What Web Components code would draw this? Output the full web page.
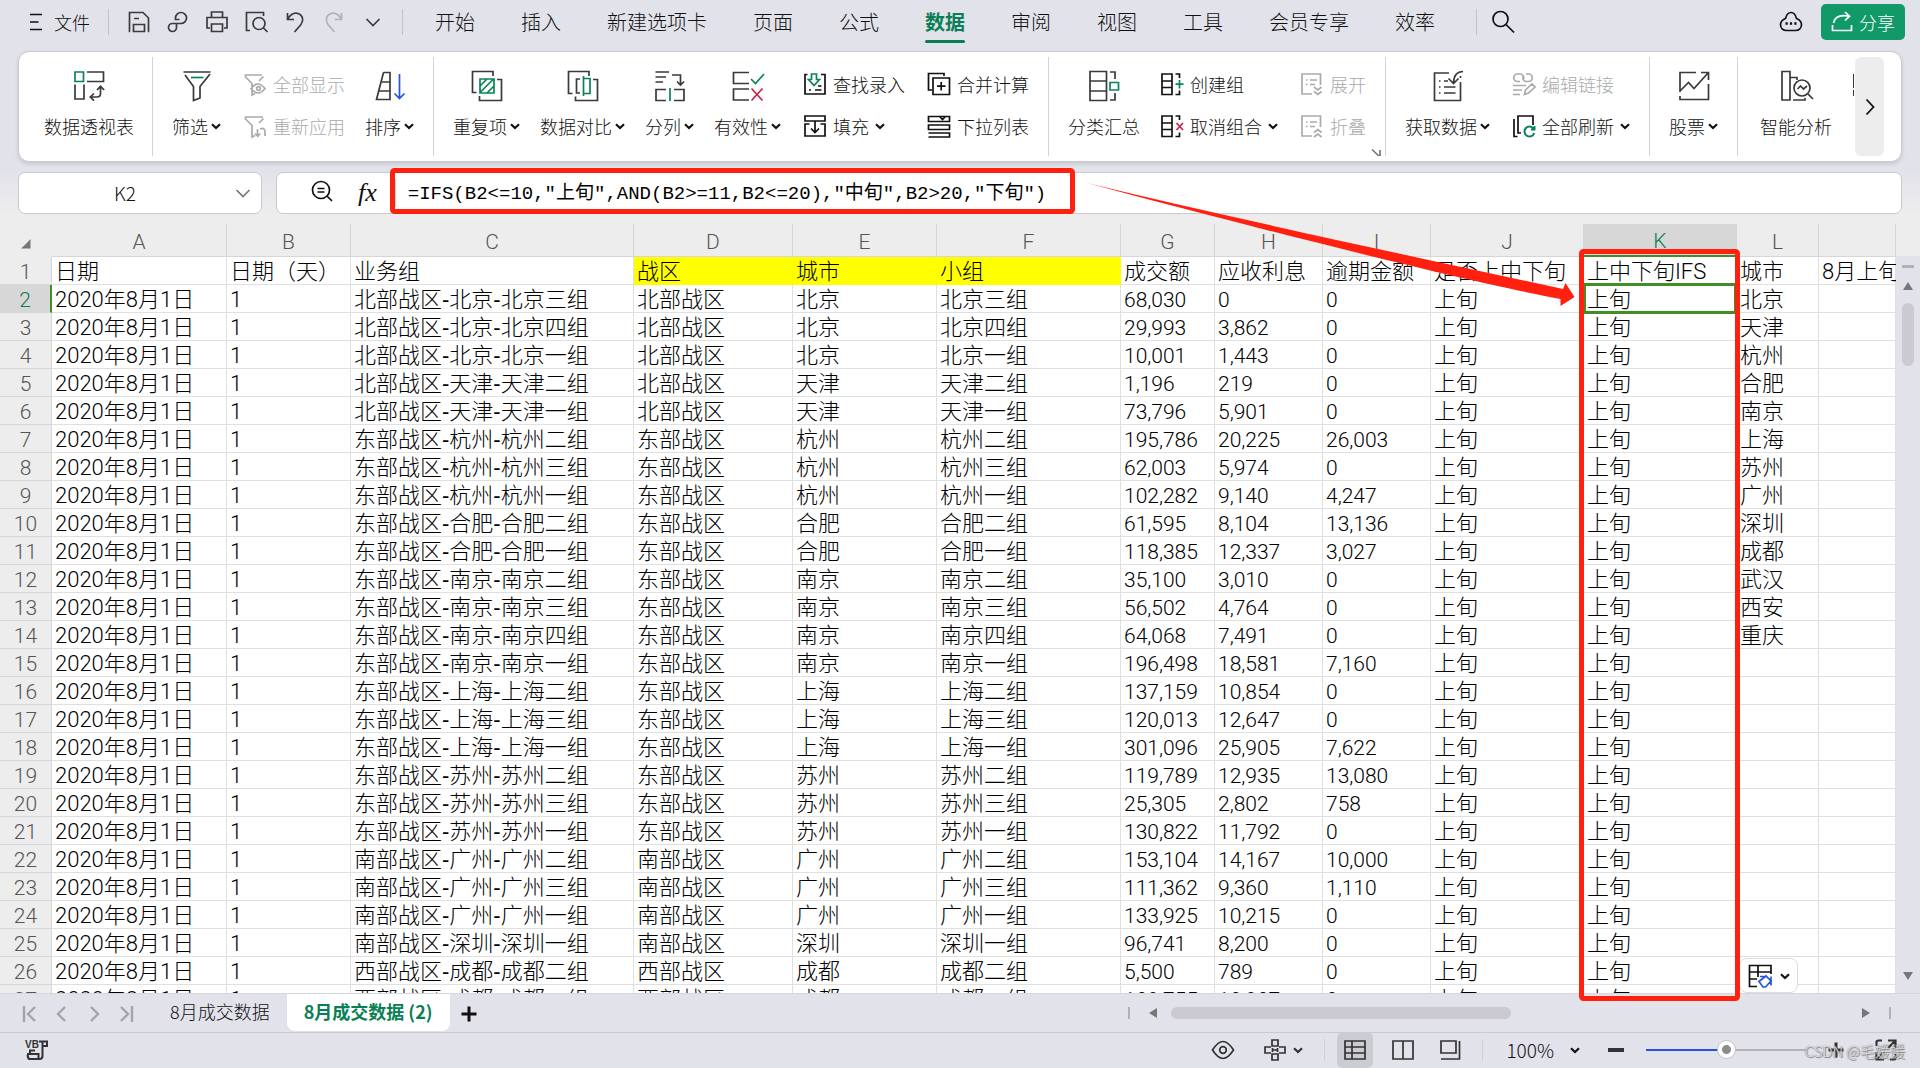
<!DOCTYPE html>
<html lang="zh-CN">
<head>
<meta charset="utf-8">
<title>8月成交数据</title>
<style>
  html, body { margin: 0; height: 100%; }
  body {
    --ink: #111;
    --green: #0a7f55;
    --chrome: #e2e2ea;
    --line: #c9c9cf;
    font-family: "Noto Sans CJK SC", "Liberation Sans", sans-serif;
    font-weight: 300;
    font-size: 18px;
    color: var(--ink);
    overflow: hidden;
  }
</style>
</head>
<body>
<sheet-app></sheet-app>

<script>
const G = '#0a8457', B = '#2354e0', R = '#c8234a';

const ICONS = {
  menu: [24, '<path d="M6 4.500h12M6 12h8.500M6 19.500h12"/>'],
  save: [24, '<path d="M3 21.500H2.500V2.500H16L21.500 8v13.500H21M7 8.500h5M6.500 21.500v-7h11v7z"/>'],
  link: [24, '<path d="M10.500 17.500a4 4 0 1 1-4-4h8.500a5.500 5.500 0 1 0-5.500-5.500v1.500h4M10.500 13.500v4"/>'],
  print: [24, '<path d="M6.500 7V2h11v5M5 18H2V7.500h20V18h-3M6.500 14h11v7.500h-11z"/>'],
  preview: [24, '<path d="M6 20.500H2.500V2.500h17V6M2.500 6v11"/><circle cx="15" cy="13.500" r="6"/><path d="M19.500 18l4 4"/>'],
  undo: [24, '<path d="M4.500 3v6.500H11M4.500 9.500C7 5 11 2.500 15 3.500c5 1.500 6 7 3 11L11.500 22"/>'],
  redo: [24, '<path d="M19.500 3v6.500H13M19.500 9.500C17 5 13 2.500 9 3.500c-5 1.500-6 7-3 11L12.500 22"/>'],
  down: [24, '<path d="M5.500 9l6.500 6.500L18.500 9"/>'],
  search: [24, '<circle cx="9.500" cy="9" r="7.500"/><path d="M15 14.500l8 8"/>'],
  cloud: [24, '<path d="M6.500 8.500C7.500 4.500 9.500 2.500 12 2.500s4.500 2 5.500 6c3.500 1.500 5 3.500 5 6 0 4-3 6-6 6h-9c-3 0-6-2-6-6 0-2.500 1.500-4.500 5-6z"/><path stroke-width="2.600" d="M6.500 13.500h2.200M10.900 13.500h2.200M15.300 13.500h2.200"/>'],
  share: [22, '<path d="M1.500 14v5.500h19V14M2.500 12c1-6 6-8.500 15-7M14 1l4.500 4.200L14 9.500"/>'],
  chev: [10, '<path stroke-width="2.200" d="M1 3.200l4 3.800 4-3.800"/>'],
  right: [24, '<path stroke-width="1.800" d="M8.500 4.500L15.500 12l-7 7.500"/>'],
  corner: [10, '<path d="M1 1.500l7.500 7M9 2v7H2"/>'],

  pivot: [32, `<path stroke="${G}" d="M2 2h8.500v9.500H2z"/><path d="M14 2h16.500v9.500H14M2 14.500V29h9V14.500M27.500 17v6.500q0 3.500-3.500 3.500h-6M24 20l3.500-3.700L31.200 20M21 23.500l-3.700 3.500 3.700 3.700"/>`],
  filter: [32, `<path d="M2.500 2h27M4 5l8.500 11.500v14L19 28V16.500L29 4"/><path stroke="${G}" d="M10 7.500h12.500"/>`],
  sort: [32, `<path d="M9.500 2.500h6.500v27H2.500L9.500 2.500M8 12h8M5.500 21H16"/><path stroke="${B}" d="M25.500 4v24M20.500 23.500l5 5 5-5"/>`],
  dup: [32, `<path d="M5.500 22.500H1.500V1.500H22V6M26 9.500h4.500v21H8.500V26"/><path stroke="${G}" d="M9 9h14v14H9zM9 16l7-7M9 22.500L22.500 9M16 23l7-7"/>`],
  compare: [32, `<path d="M5.500 23.500H1.500V1.500H22V6M13 9H9.500v14H13M26 9.500h4.500v21H8.500V26.500"/><path stroke="${G}" d="M16.500 8.500h6.500v15h-6.500zM16.500 6v20"/>`],
  split: [32, `<path d="M1.500 2H15M1.500 7H12M1.500 12H9M18 5h8.500v9M23 11.500l3.500 3.500 3.500-3.500M12 19.500H2v11h10M20 19.500h10v11H20"/><path stroke="${G}" d="M16 18v13"/>`],
  valid: [32, `<path d="M17 2.500H1.500v11H17M17 19H1.500v11H17"/><path stroke="${G}" d="M19 9l4.500 4.500L32 4"/><path stroke="${R}" d="M19.500 18.500l11 12M30.500 18.500l-11 12"/>`],
  subtotal: [32, `<path d="M2 1.500h16.500v29H2zM2 11h16.500M2 21h16.500M22 2h5v7M22 30h5v-7"/><path stroke="${G}" d="M22 12.500h8.500v7.500H22z"/>`],
  getdata: [32, '<path d="M17 3H2.500v27.500h26V12M28.500 6v2M31 1.500c-6 0-9 3-9.500 11M16.500 8.500l5 5 5-5M7 11h1.500M12 11h4M7 17h1.500M12 17h11.500M7 23h1.500M12 23h11.500"/>'],
  stock: [32, '<path d="M18 2.500H2V22M2 26v3.500h28.500V14M2 21l8.500-8.500 5.500 6L30 3M23 2.500h7.500V10"/>'],
  smart: [32, '<path d="M2 1.500h8v28.500H2zM10 7.500h7V10M13 30h12v-2"/><circle cx="22" cy="18" r="8"/><path d="M28 24l5 5M17.500 19l3-3 3 3 3.500-3"/>'],

  showall: [24, '<path d="M19 3H2.500v2L9 11.500V23l3-1.500M20.500 4.500L16 9M8 16.500q6.500-9 14 0-7 9-14 0z"/><circle cx="15.500" cy="16.500" r="1.800"/>'],
  reapply: [24, '<path d="M20 3H2.500v2L9 11.500V23l3-1.500M20.500 4.500L16 9M14.500 15v7M12 19.500l2.700 2.700 2.500-2.700M17 15q5-2 5 3v4"/>'],
  lookup: [24, `<path d="M4.500 2.500H2v19.500h20V2.500h-4M12 18h6.500M6 18h2M15 14h3.500"/><path stroke="${G}" d="M8.500 2h5v5.500h3l-5.500 6-5.500-6h3z"/>`],
  fill: [24, '<path d="M2 7V2h20v5zM6.500 10H2v12h20V10h-4.500M12 7v11M8 14.500l4 4 4-4"/>'],
  consol: [24, '<path d="M5 18H1.500V1.500H17V4M6 6h16.500v16.500H6zM14.200 10v8.500M10 14.200h8.500"/>'],
  droplist: [24, '<path d="M1.500 2.500h21v5h-21zM1.500 11h21v4.500h-21zM1.500 19h21v4h-21M13 3l2.500 2.500L18 3"/>'],
  group: [24, `<path d="M2 2h10v20.500H2zM2 9h10M2 15.500h10M15.500 2h4v4M15.500 22.500h4v-4"/><path stroke="${G}" d="M15.500 12.200h8M19.500 8v8.500"/>`],
  ungroup: [24, `<path d="M2 2h10v20.500H2zM2 9h10M2 15.500h10M15.500 2h4v4M15.500 22.500h4v-4"/><path stroke="${R}" d="M16.500 9l6.500 7M23 9l-6.500 7"/>`],
  expand: [24, '<path d="M12 22H2V2h18.500v11M6 8h1.500M10 8h7M6 12.500h1.500M10 12.500h5M14 15l3.800 3 3.700-3M14 19.500l3.800 3 3.700-3"/>'],
  collapse: [24, '<path d="M12 22H2V2h18.500v11M6 8h1.500M10 8h7M6 12.500h1.500M10 12.500h5M14 18.500l3.800-3 3.700 3M14 23l3.800-3 3.700 3"/>'],
  editlink: [24, '<path d="M8 9.500H5.500a3.500 3.500 0 1 1 0-7.500H8a3.500 3.500 0 0 1 3 5.500M14 2h2.500a3.500 3.500 0 1 1 0 7.500H14A3.500 3.500 0 0 1 11.500 4M1 13.500h13M1 18h9M1 22.500h7M12.500 22.500l1-4.500 6.500-6 3 3-6.500 6z"/>'],
  refresh: [24, `<path d="M5.500 22.500H2V5M9 19H6V2h15v9"/><path stroke="${G}" stroke-width="2" d="M21.500 14.500a5 5 0 1 0 .8 4.500M22.500 12v3.500H19"/>`],

  zoomtext: [24, '<circle cx="11" cy="11" r="8.500"/><path d="M17 17l5 5M7.500 9.500h7M7.500 13h7"/>'],
  first: [20, '<path stroke-width="2.400" d="M4 2v16M15 3L8 10l7 7"/>'],
  prev: [20, '<path stroke-width="2.400" d="M13 3l-7 7 7 7"/>'],
  next: [20, '<path stroke-width="2.400" d="M7 3l7 7-7 7"/>'],
  last: [20, '<path stroke-width="2.400" d="M16 2v16M5 3l7 7-7 7"/>'],
  plus: [20, '<path stroke-width="3" d="M10 2.500v15M2.500 10h15"/>'],
  minus: [20, '<path stroke-width="4" d="M2 10h16"/>'],
  triL: [10, '<path fill="#777" stroke="none" d="M9 0v10L1 5z"/>'],
  triR: [10, '<path fill="#777" stroke="none" d="M1 0v10l8-5z"/>'],
  triU: [10, '<path fill="#777" stroke="none" d="M0 9h10L5 1z"/>'],
  triD: [10, '<path fill="#777" stroke="none" d="M0 1h10L5 9z"/>'],
  all: [10, '<path fill="#777" stroke="none" d="M9.500 0v9.500H0C3 7 6 4 9.500 0z"/>'],
  macro: [24, '<text x="1" y="10" font-family="Liberation Sans" font-size="10" font-weight="700" fill="currentColor" stroke="none">VB</text><path stroke-width="2" d="M15 3.500h8v4.500h-4.500M18.500 3.500V18q0 3-3 3H5q-2-2-1-5h10.500v4M6 16v-3.500h5"/>'],
  eye: [24, '<path d="M1.500 12Q7 3.500 12 3.500T22.500 12Q17 20.500 12 20.500T1.500 12z"/><circle cx="12" cy="12" r="3.300"/>'],
  cross: [24, '<path d="M9 2h6v6H9zM9 16h6v6H9zM8 9H2v6h6M16 9h6v6h-6M9.500 10v4M14.500 10v4M10 12h4"/>'],
  normal: [24, '<path d="M2 3h20v18H2zM2 9h20M2 15h20M9 3v18"/>'],
  pages: [24, '<path d="M2 3h20v18H2zM12 3v18"/>'],
  layout: [24, '<path d="M2 3h15v12H2zM20.500 3v18H2"/>'],
  full: [24, '<path stroke-width="2.200" d="M2.500 8V4q0-1.500 2-1.500H8M14 2.500h7.500V10M21 3l-7 7M21.500 16v4q0 1.500-2 1.500H16M10 21.500H2.500V14M3 21l7-7"/>'],
  paste: [24, `<path d="M9 22.500H1.500V1.500H23V10M1.500 8H23M10 1.500V13M1.500 15H9"/><path stroke="${B}" d="M11 17.500l7-5.500 5 5-5.500 6H15zM12 12.500h6M23 12.500v9"/>`]
};

function define(name, css, html, setup) {
  const template = document.createElement('template');
  template.innerHTML = `<style>${css}</style>${html}`;
  customElements.define(name, class extends HTMLElement {
    constructor() {
      super();
      this.attachShadow({ mode: 'open' }).append(template.content.cloneNode(true));
    }
    connectedCallback() {
      if (setup && !this.ready) { this.ready = true; setup(this, this.shadowRoot); }
    }
  });
}

const BUTTON = 'button{font:inherit;color:inherit;background:none;border:0;padding:0;margin:0;white-space:nowrap}';

define('ui-icon',
  ':host{display:inline-flex;flex:none} svg{display:block;fill:none;stroke:currentColor;stroke-width:1.7;overflow:visible}',
  '', (el, root) => {
    const [size, body] = ICONS[el.getAttribute('name')];
    root.innerHTML += `<svg width="${size}" height="${size}" viewBox="0 0 ${size} ${size}" aria-hidden="true">${body}</svg>`;
  });

/* Menu bar */
const TABS = ['开始', '插入', '新建选项卡', '页面', '公式', '数据', '审阅', '视图', '工具', '会员专享', '效率'];
define('menu-bar', `${BUTTON}
  :host{display:flex;align-items:center;height:51px;box-sizing:border-box;padding:0 15px 7px 24px}
  .file{display:flex;align-items:center;gap:6px}
  .rule{width:1px;height:26px;background:#c2c2c8}
  .rule:first-of-type{margin-left:18px}
  .quick{display:flex;gap:15px;margin:0 17px 0 18px;color:#3b3b3b}
  .quick button,.find{height:24px}
  .quick [disabled]{color:#b0b0b6}
  nav{display:flex;gap:46px;margin:0 41px 0 32px;font-size:20px}
  nav button{position:relative;line-height:30px}
  nav .on{color:var(--green);font-weight:700}
  nav .on::after{content:"";position:absolute;left:0;right:0;bottom:-6px;height:3px;border-radius:2px;background:var(--green)}
  .find{margin-left:14px}
  .cloud{margin-left:auto;height:24px}
  .share{display:flex;align-items:center;gap:6px;margin-left:18px;height:36px;padding:0 10px;border-radius:5px;background:#119a68;color:#fff}
`, `
  <button class="file"><ui-icon name="menu"></ui-icon>文件</button>
  <span class="rule"></span>
  <div class="quick">
    <button aria-label="保存"><ui-icon name="save"></ui-icon></button>
    <button aria-label="输出"><ui-icon name="link"></ui-icon></button>
    <button aria-label="打印"><ui-icon name="print"></ui-icon></button>
    <button aria-label="打印预览"><ui-icon name="preview"></ui-icon></button>
    <button aria-label="撤销"><ui-icon name="undo"></ui-icon></button>
    <button aria-label="恢复" disabled><ui-icon name="redo"></ui-icon></button>
    <button aria-label="更多"><ui-icon name="down"></ui-icon></button>
  </div>
  <span class="rule"></span>
  <nav>${TABS.map(t => `<button class="${t === '数据' ? 'on' : ''}">${t}</button>`).join('')}</nav>
  <span class="rule"></span>
  <button class="find" aria-label="搜索"><ui-icon name="search"></ui-icon></button>
  <button class="cloud" aria-label="云"><ui-icon name="cloud"></ui-icon></button>
  <button class="share"><ui-icon name="share"></ui-icon>分享</button>
`);

/* Ribbon parts */
define('ribbon-group', `
  :host{display:flex;flex:none;gap:20px;height:99px;box-sizing:border-box;padding:0 19px;border-right:1px solid #d4d4d8;position:relative}
  :host([first]){padding-left:25px;padding-right:18px}
  :host([last]){border:0;padding-left:22px}
  .launch{position:absolute;right:4px;bottom:-2px;color:#777}
  :host(:not([launcher])) .launch{display:none}
`, '<slot></slot><ui-icon class="launch" name="corner"></ui-icon>');

define('big-button', `${BUTTON}
  :host{display:block}
  button{display:flex;flex-direction:column;align-items:center;gap:12px;padding-top:13px}
  span{display:flex;align-items:center;gap:3px;line-height:24px}
  .pic{color:#3a3a3a}
`, '<button><span><slot></slot></span></button>', (el, root) => {
  root.querySelector('button').insertAdjacentHTML('afterbegin', `<ui-icon class="pic" name="${el.getAttribute('icon')}"></ui-icon>`);
  if (el.hasAttribute('more')) root.querySelector('span').insertAdjacentHTML('beforeend', '<ui-icon name="chev"></ui-icon>');
});

define('small-button', `${BUTTON}
  :host{display:block}
  button{display:flex;align-items:center;gap:6px;height:24px}
  :host([off]) button{color:#aaa}
`, '<button><slot></slot></button>', (el, root) => {
  const b = root.querySelector('button');
  b.disabled = el.hasAttribute('off');
  b.insertAdjacentHTML('afterbegin', `<ui-icon name="${el.getAttribute('icon')}"></ui-icon>`);
  if (el.hasAttribute('more')) b.insertAdjacentHTML('beforeend', '<ui-icon name="chev"></ui-icon>');
});

define('button-stack', ':host{display:flex;flex-direction:column;gap:18px;padding-top:15px;margin-left:2px} :host([tight]){margin-left:0}', '<slot></slot>');

define('tool-ribbon', `${BUTTON}
  :host{display:flex;position:relative;margin:0 18px;padding:5px 0;height:111px;box-sizing:border-box;background:#fff;border:1px solid var(--line);border-radius:11px;box-shadow:0 2px 4px #0000001f}
  .track{display:flex;flex:1;min-width:0;overflow:hidden}
  .next{flex:none;width:29px;margin-right:17px;border-radius:6px;background:#ededed;display:grid;place-items:center}
  .cut{flex:none;width:1px;height:22px;margin:17px 1px 0 auto;background:linear-gradient(#333 62%,#fff 62% 72%,#333 72%)}
`, `
  <div class="track">
    <ribbon-group first><big-button icon="pivot">数据透视表</big-button></ribbon-group>
    <ribbon-group>
      <big-button icon="filter" more>筛选</big-button>
      <button-stack><small-button icon="showall" off>全部显示</small-button><small-button icon="reapply" off>重新应用</small-button></button-stack>
      <big-button icon="sort" more>排序</big-button>
    </ribbon-group>
    <ribbon-group>
      <big-button icon="dup" more>重复项</big-button>
      <big-button icon="compare" more>数据对比</big-button>
      <big-button icon="split" more>分列</big-button>
      <big-button icon="valid" more>有效性</big-button>
      <button-stack><small-button icon="lookup">查找录入</small-button><small-button icon="fill" more>填充</small-button></button-stack>
      <button-stack><small-button icon="consol">合并计算</small-button><small-button icon="droplist">下拉列表</small-button></button-stack>
    </ribbon-group>
    <ribbon-group launcher>
      <big-button icon="subtotal">分类汇总</big-button>
      <button-stack tight><small-button icon="group">创建组</small-button><small-button icon="ungroup" more>取消组合</small-button></button-stack>
      <button-stack><small-button icon="expand" off>展开</small-button><small-button icon="collapse" off>折叠</small-button></button-stack>
    </ribbon-group>
    <ribbon-group>
      <big-button icon="getdata" more>获取数据</big-button>
      <button-stack><small-button icon="editlink" off>编辑链接</small-button><small-button icon="refresh" more>全部刷新</small-button></button-stack>
    </ribbon-group>
    <ribbon-group><big-button icon="stock" more>股票</big-button></ribbon-group>
    <ribbon-group last><big-button icon="smart">智能分析</big-button></ribbon-group>
    <span class="cut"></span>
  </div>
  <button class="next" aria-label="更多工具"><ui-icon name="right"></ui-icon></button>
`);

/* Formula bar */
define('formula-bar', `${BUTTON}
  :host{display:flex;gap:14px;height:42px;margin:10px 18px 10px}
  .box{display:flex;align-items:center;box-sizing:border-box;background:#fff;border:1px solid var(--line);border-radius:7px}
  .name{width:244px}
  .name input{width:212px;text-align:center;font-size:19px}
  .name button{height:24px;color:#777}
  .formula{flex:1;padding-left:33px}
  input{border:0;outline:0;background:none;padding:0 0 2px;min-width:0;font:inherit;color:inherit}
  .fx{font:italic 26px/30px "Liberation Serif",serif;margin:0 18px 0 24px}
  .formula input{flex:1;height:28px;padding:0 0 4px 12px;box-sizing:border-box;border-left:1px solid #d4d4d4;font:19px "Liberation Mono","Noto Sans CJK SC",monospace;color:#000}
`, `
  <div class="box name"><input aria-label="名称框" value="K2"><button aria-label="名称列表"><ui-icon name="down"></ui-icon></button></div>
  <div class="box formula">
    <button aria-label="查找公式"><ui-icon name="zoomtext"></ui-icon></button>
    <button class="fx">fx</button>
    <input aria-label="编辑栏" value='=IFS(B2&lt;=10,"上旬",AND(B2&gt;=11,B2&lt;=20),"中旬",B2&gt;20,"下旬")'>
  </div>
`);

/* Sheet */
const COLS = [['A', 175], ['B', 124], ['C', 283], ['D', 159], ['E', 144], ['F', 184], ['G', 94], ['H', 108], ['I', 108], ['J', 153], ['K', 153], ['L', 82], ['', 0]];
const CITIES = '北京 天津 杭州 合肥 南京 上海 苏州 广州 深圳 成都 武汉 西安 重庆'.split(' ');
const DATA = `北 北京 三 68,030 0 0
北 北京 四 29,993 3,862 0
北 北京 一 10,001 1,443 0
北 天津 二 1,196 219 0
北 天津 一 73,796 5,901 0
东 杭州 二 195,786 20,225 26,003
东 杭州 三 62,003 5,974 0
东 杭州 一 102,282 9,140 4,247
东 合肥 二 61,595 8,104 13,136
东 合肥 一 118,385 12,337 3,027
东 南京 二 35,100 3,010 0
东 南京 三 56,502 4,764 0
东 南京 四 64,068 7,491 0
东 南京 一 196,498 18,581 7,160
东 上海 二 137,159 10,854 0
东 上海 三 120,013 12,647 0
东 上海 一 301,096 25,905 7,622
东 苏州 二 119,789 12,935 13,080
东 苏州 三 25,305 2,802 758
东 苏州 一 130,822 11,792 0
南 广州 二 153,104 14,167 10,000
南 广州 三 111,362 9,360 1,110
南 广州 一 133,925 10,215 0
南 深圳 一 96,741 8,200 0
西 成都 二 5,500 789 0
西 成都 一 109,755 10,907 0`.split('\n').map((line, i) => {
  const [z, city, g, a, b, c] = line.split(' ');
  const zone = z + '部战区', team = `${city}${g}组`;
  return ['2020年8月1日', '1', `${zone}-${city}-${team}`, zone, city, team, a, b, c, '上旬', '上旬', CITIES[i] || '', ''];
});
const HEAD = ['日期', '日期（天）', '业务组', '战区', '城市', '小组', '成交额', '应收利息', '逾期金额', '是否上中下旬', '上中下旬IFS', '城市', '8月上旬'];
const KIND = { 2: 't', 6: 'n', 7: 'n', 8: 'n' };

define('sheet-grid', `${BUTTON}
  :host{display:flex;flex:1;min-height:0;position:relative;background:#ededed;border-bottom:1px solid #d6d6dc}
  .view{flex:1;min-width:0;overflow:hidden}
  table{width:100%;table-layout:fixed;border-collapse:separate;border-spacing:0;color:#000;font-family:Roboto,"Noto Sans CJK SC",sans-serif;font-size:22px}
  th,td{box-sizing:border-box;padding:0;white-space:nowrap;border-right:1px solid #e0e0e0;border-bottom:1px solid #e0e0e0}
  th{background:#ededed;color:#555;font-weight:300;font-size:21px;border-color:#d6d6d6;text-align:center}
  thead th{height:32px;line-height:28px;padding-top:3px}
  thead th:first-child{border-right-color:#ededed;border-bottom-color:#ededed}
  tbody tr{height:28px}
  td,tbody th{height:28px;line-height:24px;padding-top:3px}
  td{background:#fff;padding-left:3px;text-align:left}
  td.n{font-size:21px}
  td.t{font-family:"Liberation Sans","Noto Sans CJK SC",sans-serif}
  td.y{background:#ff0;border-color:#ff0}
  thead th.on{background:#d7d7d7;color:var(--green);border-bottom:2px solid #3f8f22}
  tbody th.on{background:#d7d7d7;color:var(--green);border-right:2px solid #3f8f22}
  td.sel{position:relative}
  td.sel::after{content:"";position:absolute;inset:-2px -1px -2px -1px;border:3px solid #3f8f22}
  .bar{width:24px;margin-top:32px;background:var(--chrome);display:flex;flex-direction:column;align-items:center}
  .split{width:12px;height:3px;margin:9px 0 13px;background:#b2b2b8}
  .thumb{width:12px;height:63px;border-radius:6px;margin-top:12px;background:#cacad0}
  .end{margin:auto 0 12px}
  .paste{position:absolute;left:1739px;bottom:0;width:59px;height:35px;box-sizing:border-box;background:#fff;border:1px solid #dcdce0;border-radius:8px;display:flex;align-items:center;justify-content:center;gap:8px}
`, `
  <div class="view"><table>
    <colgroup><col style="width:52px">${COLS.map(c => `<col${c[1] ? ` style="width:${c[1]}px"` : ''}>`).join('')}</colgroup>
    <thead><tr><th><ui-icon name="all"></ui-icon></th>${COLS.map(c => `<th class="${c[0] === 'K' ? 'on' : ''}">${c[0]}</th>`).join('')}</tr></thead>
    <tbody>
      <tr><th>1</th>${HEAD.map((t, i) => `<td class="${i > 2 && i < 6 ? 'y' : ''}">${t}</td>`).join('')}</tr>
      ${DATA.map((r, n) => `<tr><th class="${n ? '' : 'on'}">${n + 2}</th>${r.map((t, i) => `<td class="${KIND[i] || (!n && i === 10 ? 'sel' : '')}">${t}</td>`).join('')}</tr>`).join('')}
    </tbody>
  </table></div>
  <div class="bar"><span class="split"></span><ui-icon name="triU"></ui-icon><span class="thumb"></span><ui-icon class="end" name="triD"></ui-icon></div>
  <button class="paste" aria-label="粘贴选项"><ui-icon name="paste"></ui-icon><ui-icon name="chev"></ui-icon></button>
`);

/* Sheet tabs and horizontal scroll bar */
define('sheet-tabs', `${BUTTON}
  :host{display:flex;align-items:center;height:38px;box-sizing:border-box;background:var(--chrome);padding:0 29px 0 20px}
  .nav{display:flex;gap:12px;color:#a4a4aa}
  .nav button,.add{height:20px}
  .tab{height:37px;padding:0 17px 3px;align-self:flex-start;line-height:32px}
  .nav + .tab{margin-left:17px}
  .on{background:#fff;border-radius:0 0 8px 8px;color:var(--green);font-weight:700}
  .add{margin-left:9px}
  .scroll{display:flex;align-items:center;gap:18px;width:763px;margin-left:auto}
  .grip{width:2px;height:12px;background:#b2b2b8}
  .thumb{width:340px;height:12px;border-radius:6px;background:#cacad0;margin:0 auto 0 -5px}
`, `
  <div class="nav">
    <button aria-label="第一个"><ui-icon name="first"></ui-icon></button><button aria-label="上一个"><ui-icon name="prev"></ui-icon></button><button aria-label="下一个"><ui-icon name="next"></ui-icon></button><button aria-label="最后一个"><ui-icon name="last"></ui-icon></button>
  </div>
  <button class="tab">8月成交数据</button>
  <button class="tab on">8月成交数据 (2)</button>
  <button class="add" aria-label="新建工作表"><ui-icon name="plus"></ui-icon></button>
  <div class="scroll"><span class="grip"></span><ui-icon name="triL"></ui-icon><span class="thumb"></span><ui-icon name="triR"></ui-icon><span class="grip"></span></div>
`);

/* Status bar */
define('status-bar', `${BUTTON}
  :host{display:flex;align-items:center;position:relative;height:36px;box-sizing:border-box;border-top:1px solid var(--line);background:var(--chrome);padding:0 22px 2px 24px;color:#333}
  button{display:flex;align-items:center;height:24px}
  .right{display:flex;align-items:center;margin-left:auto}
  .move{gap:6px;margin:0 21px 0 28px}
  .rule{width:1px;height:22px;background:#cfcfd5}
  .views{display:flex;gap:12px;margin:0 13px 0 12px}
  .views button{width:36px;height:36px;justify-content:center;border-radius:6px}
  .views .on{background:#cbcbd2}
  .zoom{gap:16px;margin:0 26px 0 23px;color:var(--ink);font-size:19px}
  input{appearance:none;width:160px;height:20px;margin:0 20px;background:linear-gradient(90deg,#2354e0 50%,#b2b2b8 50%) center/100% 2px no-repeat}
  input::-webkit-slider-thumb{appearance:none;width:19px;height:19px;border-radius:50%;border:1px solid #c4c4ca;background:radial-gradient(circle,#8c8c8c 4px,#fff 5px)}
  .full{margin-left:28px}
  .sign{position:absolute;right:15px;bottom:6px;line-height:22px;font-size:15px;color:#fffc;text-shadow:0 0 1px #555,1px 1px 1px #777}
`, `
  <button aria-label="宏"><ui-icon name="macro"></ui-icon></button>
  <div class="right">
    <button aria-label="护眼"><ui-icon name="eye"></ui-icon></button>
    <button class="move" aria-label="阅读模式"><ui-icon name="cross"></ui-icon><ui-icon name="chev"></ui-icon></button>
    <span class="rule"></span>
    <div class="views"><button class="on" aria-label="普通"><ui-icon name="normal"></ui-icon></button><button aria-label="分页"><ui-icon name="pages"></ui-icon></button><button aria-label="页面"><ui-icon name="layout"></ui-icon></button></div>
    <span class="rule"></span>
    <button class="zoom">100%<ui-icon name="chev"></ui-icon></button>
    <button aria-label="缩小"><ui-icon name="minus"></ui-icon></button>
    <input type="range" aria-label="缩放" min="0" max="100" value="50">
    <button aria-label="放大"><ui-icon name="plus"></ui-icon></button>
    <button class="full" aria-label="全屏"><ui-icon name="full"></ui-icon></button>
  </div>
  <span class="sign">CSDN @毛媛媛</span>
`);

/* Red annotation drawn over the sheet */
define('mark-layer', `
  :host{position:absolute;left:0;top:0;pointer-events:none}
  svg{display:block}
`, `
  <svg width="1760" height="1010" viewBox="0 0 1760 1010" fill="none" stroke="#ff2010" stroke-width="5" stroke-linejoin="round" aria-hidden="true">
    <rect x="392.500" y="170.500" width="680" height="41" rx="2"/>
    <rect x="1581.500" y="251.500" width="156" height="747" rx="2"/>
    <path fill="#ff2010" stroke="none" d="M1087 183C1250 222 1420 258 1563 289l2.500-6 9 14-14 9v-7C1480 284 1300 240 1087 183z"/>
  </svg>
`);

define('sheet-app', `
  :host{display:flex;flex-direction:column;height:100vh;position:relative;background:linear-gradient(#e2e2ea 170px,#ededed 215px)}
`, '<menu-bar></menu-bar><tool-ribbon></tool-ribbon><formula-bar></formula-bar><sheet-grid></sheet-grid><sheet-tabs></sheet-tabs><status-bar></status-bar><mark-layer></mark-layer>');
</script>
</body>
</html>
